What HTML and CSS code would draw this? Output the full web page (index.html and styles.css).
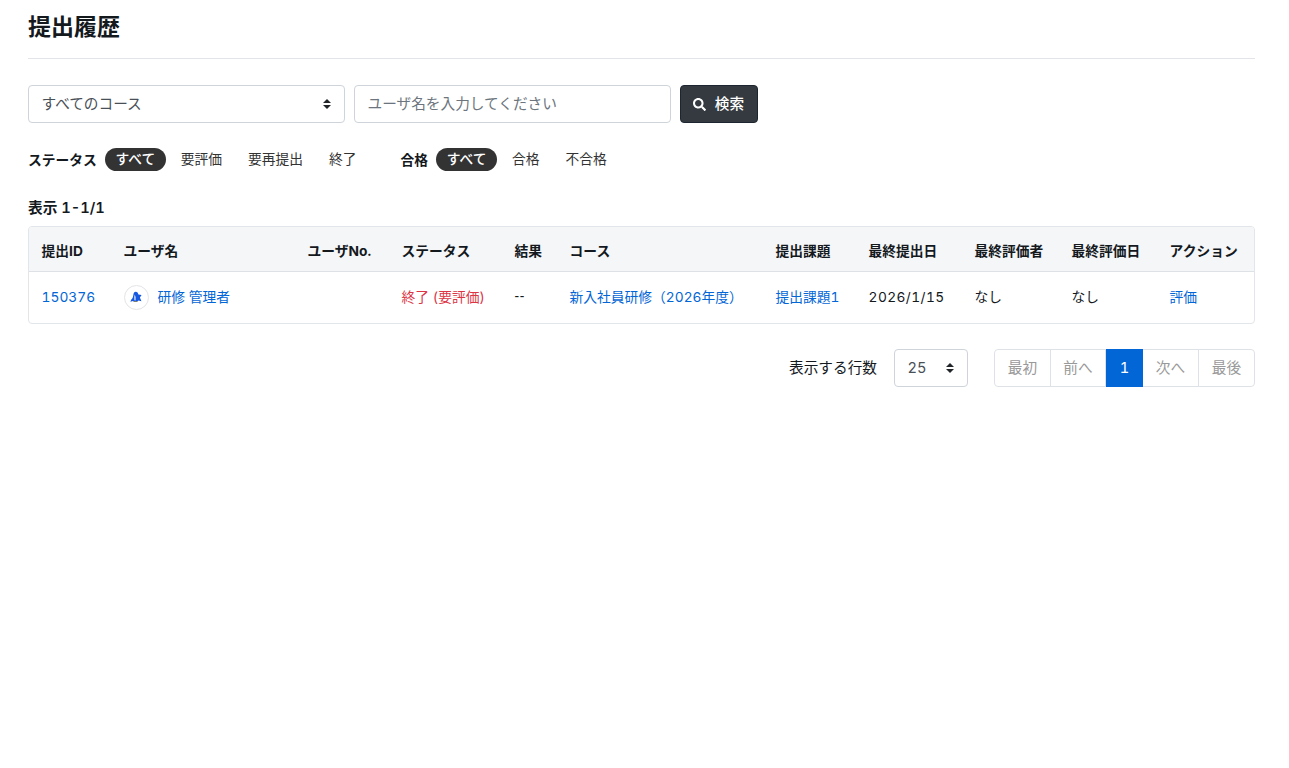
FILE: index.html
```
<!DOCTYPE html>
<html lang="ja">
<head>
    <meta charset="UTF-8">
    <title>提出履歴</title>
    <link rel="stylesheet" href="styles.css">
</head>
<body>
    <main class="container">
        <h1 class="page-title">提出履歴</h1>

        <form class="search-form">
            <div class="select select-course">
                <span>すべてのコース</span>
                <svg class="caret" viewBox="0 0 4 5"><path d="M2 0L0 2h4zm0 5L0 3h4z"/></svg>
            </div>
            <input type="text" class="search-input" placeholder="ユーザ名を入力してください">
            <button type="button" class="btn-search">
                <svg class="icon-search" viewBox="0 0 512 512"><path d="M505 442.7L405.3 343c-4.5-4.5-10.6-7-17-7H372c27.6-35.3 44-79.7 44-128C416 93.1 322.9 0 208 0S0 93.1 0 208s93.1 208 208 208c48.3 0 92.7-16.4 128-44v16.3c0 6.4 2.5 12.5 7 17l99.7 99.7c9.4 9.4 24.6 9.4 33.9 0l28.3-28.3c9.4-9.4 9.4-24.6.1-34zM208 336c-70.7 0-128-57.2-128-128 0-70.7 57.2-128 128-128 70.7 0 128 57.2 128 128 0 70.7-57.2 128-128 128z"/></svg>
                <span>検索</span>
            </button>
        </form>

        <div class="filters">
            <div class="filter-group">
                <span class="filter-label">ステータス</span>
                <a class="filter active">すべて</a>
                <a class="filter">要評価</a>
                <a class="filter">要再提出</a>
                <a class="filter">終了</a>
            </div>
            <div class="filter-group">
                <span class="filter-label">合格</span>
                <a class="filter active">すべて</a>
                <a class="filter">合格</a>
                <a class="filter">不合格</a>
            </div>
        </div>

        <div class="count">表示 <span class="count-num">1-1/1</span></div>

        <div class="table-wrap">
            <table class="table">
                <colgroup>
                    <col class="col-id"><col class="col-user"><col class="col-no"><col class="col-status">
                    <col class="col-result"><col class="col-course"><col class="col-task"><col class="col-submitted">
                    <col class="col-grader"><col class="col-graded"><col>
                </colgroup>
                <thead>
                    <tr>
                        <th>提出ID</th>
                        <th>ユーザ名</th>
                        <th>ユーザNo.</th>
                        <th>ステータス</th>
                        <th>結果</th>
                        <th>コース</th>
                        <th>提出課題</th>
                        <th>最終提出日</th>
                        <th>最終評価者</th>
                        <th>最終評価日</th>
                        <th>アクション</th>
                    </tr>
                </thead>
                <tbody>
                    <tr>
                        <td><a class="link">150376</a></td>
                        <td>
                            <a class="link user">
                                <span class="avatar">
                                    <svg viewBox="0 0 12 12"><path class="bird-body" d="M3.3 4.2Q3.6.6 6 .8 8 1 8.4 3.6L11.6 4 9.9 6.6l1.5 3.6-2.8-.6-1.6 1.2H4L3 10 .4 10.8Q.8 8.4 2.6 7z"/><path class="bird-belly" d="M4.6 3.6Q3.6 6 4.2 9.2l1.6.2Q6.6 6 4.6 3.6z"/><path class="bird-feet" d="M4 9.9h3l.5 1H3.5z"/></svg>
                                </span>
                                <span>研修 管理者</span>
                            </a>
                        </td>
                        <td></td>
                        <td class="danger">終了 (要評価)</td>
                        <td class="dash">--</td>
                        <td><a class="link">新入社員研修（2026年度）</a></td>
                        <td><a class="link">提出課題1</a></td>
                        <td class="date">2026/1/15</td>
                        <td>なし</td>
                        <td>なし</td>
                        <td><a class="link">評価</a></td>
                    </tr>
                </tbody>
            </table>
        </div>

        <div class="table-footer">
            <span>表示する行数</span>
            <div class="select select-rows">
                <span>25</span>
                <svg class="caret" viewBox="0 0 4 5"><path d="M2 0L0 2h4zm0 5L0 3h4z"/></svg>
            </div>
            <div class="pagination">
                <a class="page">最初</a>
                <a class="page">前へ</a>
                <a class="page current">1</a>
                <a class="page">次へ</a>
                <a class="page">最後</a>
            </div>
        </div>
    </main>
</body>
</html>
```
FILE: styles.css
```
* { box-sizing: border-box; }
body { margin: 0; background: #fff; color: #14191e; font-family: Inter, "Noto Sans CJK JP", sans-serif; font-size: 13.75px; line-height: 20px; font-variant-numeric: tabular-nums; }
.container { width: 1227px; margin-left: 28px; }
.page-title { margin: 0; height: 59px; padding-top: 10px; border-bottom: 1px solid #e2e4e9; font-size: 23px; line-height: 34px; font-weight: 700; }

.search-form { display: flex; gap: 9px; margin-top: 26px; height: 38px; font-size: 14.67px; }
.select { display: flex; align-items: center; justify-content: space-between; height: 38px; padding: 0 13px 0 12.5px; border: 1px solid #ced4da; border-radius: 4px; color: #495057; background: #fff; font-size: 14.67px; }
.select-course { width: 317px; }
.caret { width: 8px; height: 10px; fill: #212529; }
.search-input { width: 317px; padding: 0 12.5px; border: 1px solid #ced4da; border-radius: 4px; font: inherit; }
.search-input::placeholder { color: #6c757d; opacity: 1; }
.btn-search { display: flex; align-items: center; justify-content: center; gap: 9px; width: 78px; padding: 0 1px 0 0; border: 1px solid #1d2630; border-radius: 4px; background: #343a40; color: #fff; font: inherit; font-weight: 500; }
.icon-search { width: 13px; height: 13px; fill: #fff; }

.filters { display: flex; gap: 29px; margin-top: 25px; height: 23px; }
.filter-group { display: flex; align-items: center; }
.filter-label { font-weight: 700; margin-right: 8px; }
.filter { height: 23px; padding: 0 11px; margin-right: 4px; border-radius: 12px; line-height: 23px; color: #333; }
.filter.active { width: 61px; padding: 0; text-align: center; background: #333; color: #fff; font-weight: 500; }

.count { margin-top: 27px; font-size: 14.67px; font-weight: 700; }
.count-num { font-weight: 600; }

.table-wrap { margin-top: 8px; height: 98px; border: 1px solid #e2e5e9; border-radius: 4px; overflow: hidden; }
.table { width: 100%; table-layout: fixed; border-collapse: separate; border-spacing: 0; }
.table th, .table td { padding: 0 0 0 12.6px; text-align: left; white-space: nowrap; }
.table th { height: 45px; padding-top: 4px; background: #f5f6f8; border-bottom: 1px solid #dee2e6; font-weight: 700; }
.table td { height: 50px; }
.col-id { width: 82px; }
.col-user { width: 184px; }
.col-no { width: 94px; }
.col-status { width: 113px; }
.col-result { width: 55px; }
.col-course { width: 206px; }
.col-task { width: 93px; }
.col-submitted { width: 106px; }
.col-grader { width: 97px; }
.col-graded { width: 98px; }
.link { color: #0366d6; }
.date { letter-spacing: 0.4px; }
.table .dash { font-family: "Liberation Sans", sans-serif; letter-spacing: 0.5px; }
.user { display: flex; align-items: center; gap: 9px; }
.avatar { display: flex; align-items: center; justify-content: center; width: 25px; height: 25px; border: 1px solid #e2e4e8; border-radius: 50%; }
.avatar svg { width: 12px; height: 12px; }
.bird-body { fill: #1758e0; }
.bird-belly { fill: #a9c6fa; }
.bird-feet { fill: #7d7f68; }
.danger { color: #dc3545; }

.table-footer { display: flex; align-items: center; justify-content: flex-end; margin-top: 25px; font-size: 14.67px; }
.select-rows { width: 74px; margin-left: 17px; }
.pagination { display: flex; width: 261px; height: 38px; margin-left: 26px; border: 1px solid #dee2e6; border-radius: 4px; color: #999; }
.page { width: 56px; border-right: 1px solid #dee2e6; text-align: center; line-height: 37px; }
.page:nth-child(2) { width: 55px; }
.page:last-child { width: 55px; border-right: 0; }
.page.current { width: 37px; margin: -1px 0; border: 0; background: #0366d6; color: #fff; line-height: 39px; }
```
